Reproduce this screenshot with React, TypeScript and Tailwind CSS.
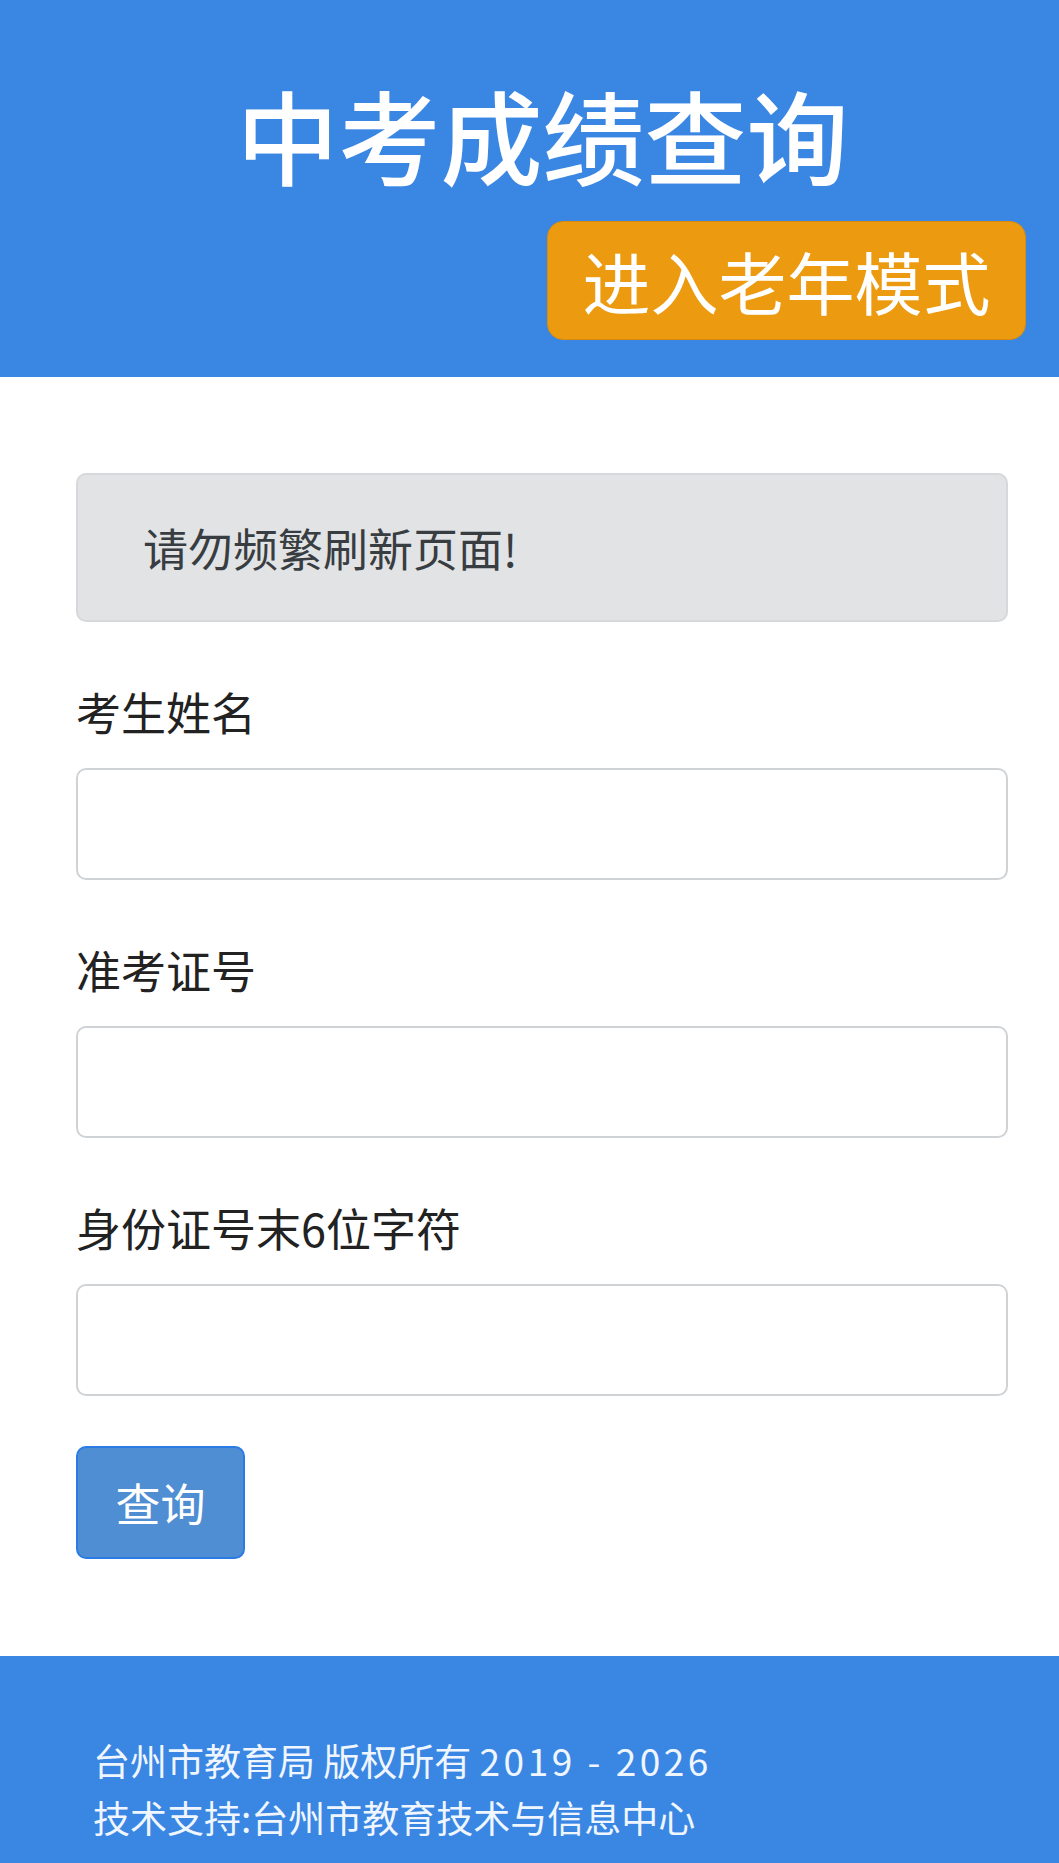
import React from 'react';

const cjk = { fontFamily: '"Noto Sans CJK SC", "Noto Sans", sans-serif' };

const fields = ['考生姓名', '准考证号', '身份证号末6位字符'];

export default function App() {
  return (
    <div className="min-h-[1863px] w-full bg-white flex flex-col" style={cjk}>
      {/* Header */}
      <header className="bg-[#3a86e3] flex flex-col pt-[74px] pb-[37px]">
        <h1 className="text-center pl-[26px] text-[102px] leading-[120px] font-medium text-white">
          中考成绩查询
        </h1>
        <button className="self-end mr-[33px] mt-[27px] w-[479px] h-[119px] rounded-[16px] bg-[#ec9a0f] border border-[#d98c0c] text-white text-[68px] leading-none flex items-center justify-center">
          进入老年模式
        </button>
      </header>

      {/* Form */}
      <main className="pl-[76px] pr-[51px] pt-[96px] pb-[97px] flex flex-col">
        <div className="h-[149px] rounded-[10px] bg-[#e2e3e5] border-2 border-[#d6d8db] flex items-center pl-[65px] text-[45px] text-[#383d41]">
          请勿频繁刷新页面!
        </div>

        {fields.map((label) => (
          <div key={label} className="flex flex-col mt-[56px]">
            <label className="text-[45px] leading-[67px] text-[#222]">{label}</label>
            <input
              type="text"
              className="mt-[23px] h-[112px] rounded-[10px] border-2 border-[#d0d3d6] bg-white px-4 text-[45px] outline-none"
            />
          </div>
        ))}

        <button className="mt-[50px] self-start w-[169px] h-[113px] rounded-[10px] bg-[#4f8ed3] border-2 border-[#2a7be4] text-white text-[45px] flex items-center justify-center">
          查询
        </button>
      </main>

      {/* Footer */}
      <footer className="bg-[#3a86e3] flex-1 pt-[76px] pb-[17px] pl-[93px] text-[37px] leading-[57px] text-[#f0f6ff]">
        <p>
          台州市教育局 版权所有 <span className="tracking-[3.5px]">2019 - 2026</span>
        </p>
        <p>技术支持:台州市教育技术与信息中心</p>
      </footer>
    </div>
  );
}
